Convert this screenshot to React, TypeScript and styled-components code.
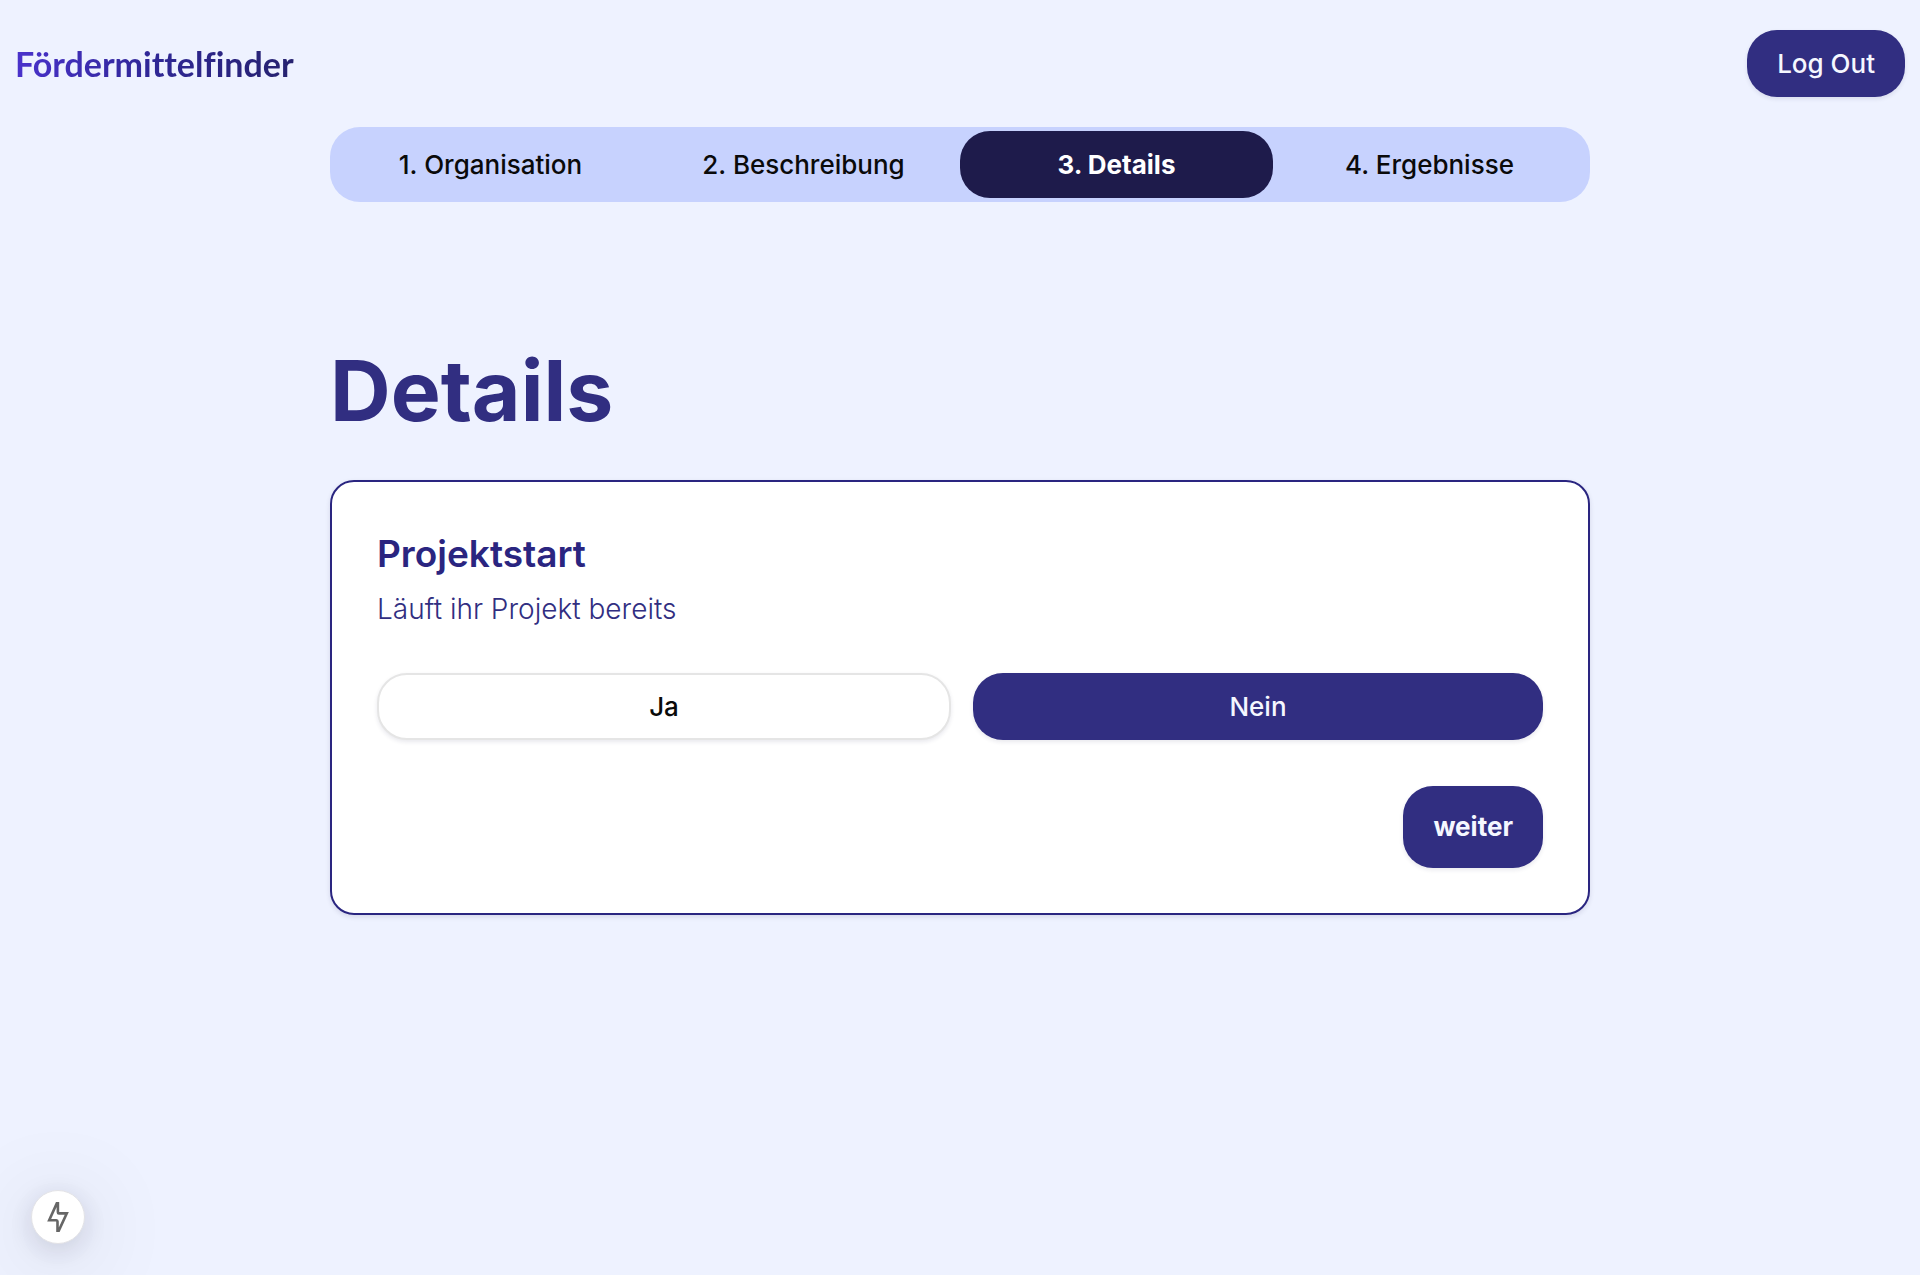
import React, { useState } from "react";
import styled, { createGlobalStyle } from "styled-components";

const GlobalStyle = createGlobalStyle`
  *, *::before, *::after { box-sizing: border-box; }
  body {
    margin: 0;
    min-height: 100vh;
    background: #eef2ff;
    color: #0a0a0a;
    font-family: Inter, "Liberation Sans", sans-serif;
    font-size: 26px;
    line-height: 36px;
  }
  button { font: inherit; cursor: pointer; }
  h1, h2, p { margin: 0; }
`;

const Header = styled.header`
  display: flex;
  align-items: center;
  justify-content: space-between;
  padding: 30px 15px;
`;

const Brand = styled.a`
  font-family: Lato, "Liberation Sans", sans-serif;
  font-size: 34px;
  font-weight: 700;
  font-variant-ligatures: none;
  line-height: 44px;
  text-decoration: none;
  color: transparent;
  background: linear-gradient(to right, #4a32cc, #2f2795 50%, #26226f);
  background-clip: text;
`;

const Button = styled.button<{ $outline?: boolean }>`
  min-height: 67px;
  padding: 0 30px;
  border: ${(p) => (p.$outline ? "2px solid #e5e5e5" : "0")};
  border-radius: 30px;
  background: ${(p) => (p.$outline ? "#ffffff" : "#312e81")};
  color: ${(p) => (p.$outline ? "#0a0a0a" : "#f5f7ff")};
  font-weight: 500;
  box-shadow: 0 2px 4px rgba(30, 27, 75, 0.1);
`;

const NextButton = styled(Button)`
  min-height: 82px;
  font-weight: 700;
`;

const Main = styled.main`
  width: 100%;
  max-width: 1260px;
  margin: 0 auto;
`;

const Steps = styled.nav`
  display: grid;
  grid-template-columns: repeat(4, 1fr);
  padding: 4px;
  border-radius: 30px;
  background: #c7d2fe;
`;

const Step = styled.a<{ $active: boolean }>`
  padding: 16px 8px 15px;
  border-radius: 30px;
  text-align: center;
  text-decoration: none;
  background: ${(p) => (p.$active ? "#1e1b4b" : "transparent")};
  color: ${(p) => (p.$active ? "#ffffff" : "#0a0a0a")};
  font-weight: ${(p) => (p.$active ? 700 : 500)};
`;

const Title = styled.h1`
  margin: 141px 0 41px;
  color: #312e81;
  font-size: 84px;
  font-weight: 700;
  line-height: 96px;
`;

const Card = styled.section`
  padding: 45px;
  border: 2px solid #2a2580;
  border-radius: 24px;
  background: #ffffff;
  color: #312e81;
  box-shadow: 0 2px 5px rgba(30, 27, 75, 0.12);
`;

const CardTitle = styled.h2`
  color: #2a2580;
  font-size: 37px;
  font-weight: 600;
  line-height: 54px;
`;

const Question = styled.p`
  margin-top: 10px;
  font-size: 28px;
  font-weight: 300;
`;

const Choices = styled.div`
  display: flex;
  gap: 22px;
  margin: 46px 0;

  > button { flex: 1 1 0; }
`;

const Actions = styled.div`
  display: flex;
  justify-content: flex-end;
`;

const DevBadge = styled.button`
  position: fixed;
  left: 31px;
  bottom: 31px;
  display: grid;
  place-items: center;
  width: 54px;
  height: 54px;
  padding: 0;
  border: 1px solid #e2e2e6;
  border-radius: 50%;
  background: #ffffff;
  box-shadow: 0 6px 28px rgba(20, 18, 50, 0.14), 0 12px 90px rgba(20, 18, 50, 0.18);
`;

const steps = ["Organisation", "Beschreibung", "Details", "Ergebnisse"];
const currentStep = 2;

export default function App() {
  const [started, setStarted] = useState(false);

  return (
    <>
      <GlobalStyle />
      <Header>
        <Brand href="#">Fördermittelfinder</Brand>
        <Button type="button">Log Out</Button>
      </Header>
      <Main>
        <Steps>
          {steps.map((name, i) => (
            <Step
              key={name}
              href={`#${name.toLowerCase()}`}
              $active={i === currentStep}
              aria-current={i === currentStep ? "step" : undefined}
            >
              {i + 1}. {name}
            </Step>
          ))}
        </Steps>
        <Title>Details</Title>
        <Card>
          <CardTitle>Projektstart</CardTitle>
          <Question id="question">Läuft ihr Projekt bereits</Question>
          <Choices role="group" aria-labelledby="question">
            <Button type="button" $outline={!started} aria-pressed={started} onClick={() => setStarted(true)}>
              Ja
            </Button>
            <Button type="button" $outline={started} aria-pressed={!started} onClick={() => setStarted(false)}>
              Nein
            </Button>
          </Choices>
          <Actions>
            <NextButton type="button">weiter</NextButton>
          </Actions>
        </Card>
      </Main>
      <DevBadge type="button" aria-label="Dev">
        <svg width="26" height="32" viewBox="0 0 26 32" fill="none" stroke="#666666" strokeWidth="2.6" strokeLinejoin="miter">
          <path d="M11.8 2.4 L4.2 19.2 H11.4 Q12.5 19.2 12.5 20.4 V29.6 H13.8 L21.8 12.4 H14 Q12.9 12.4 12.9 11.2 V2.4 Z" />
        </svg>
      </DevBadge>
    </>
  );
}
